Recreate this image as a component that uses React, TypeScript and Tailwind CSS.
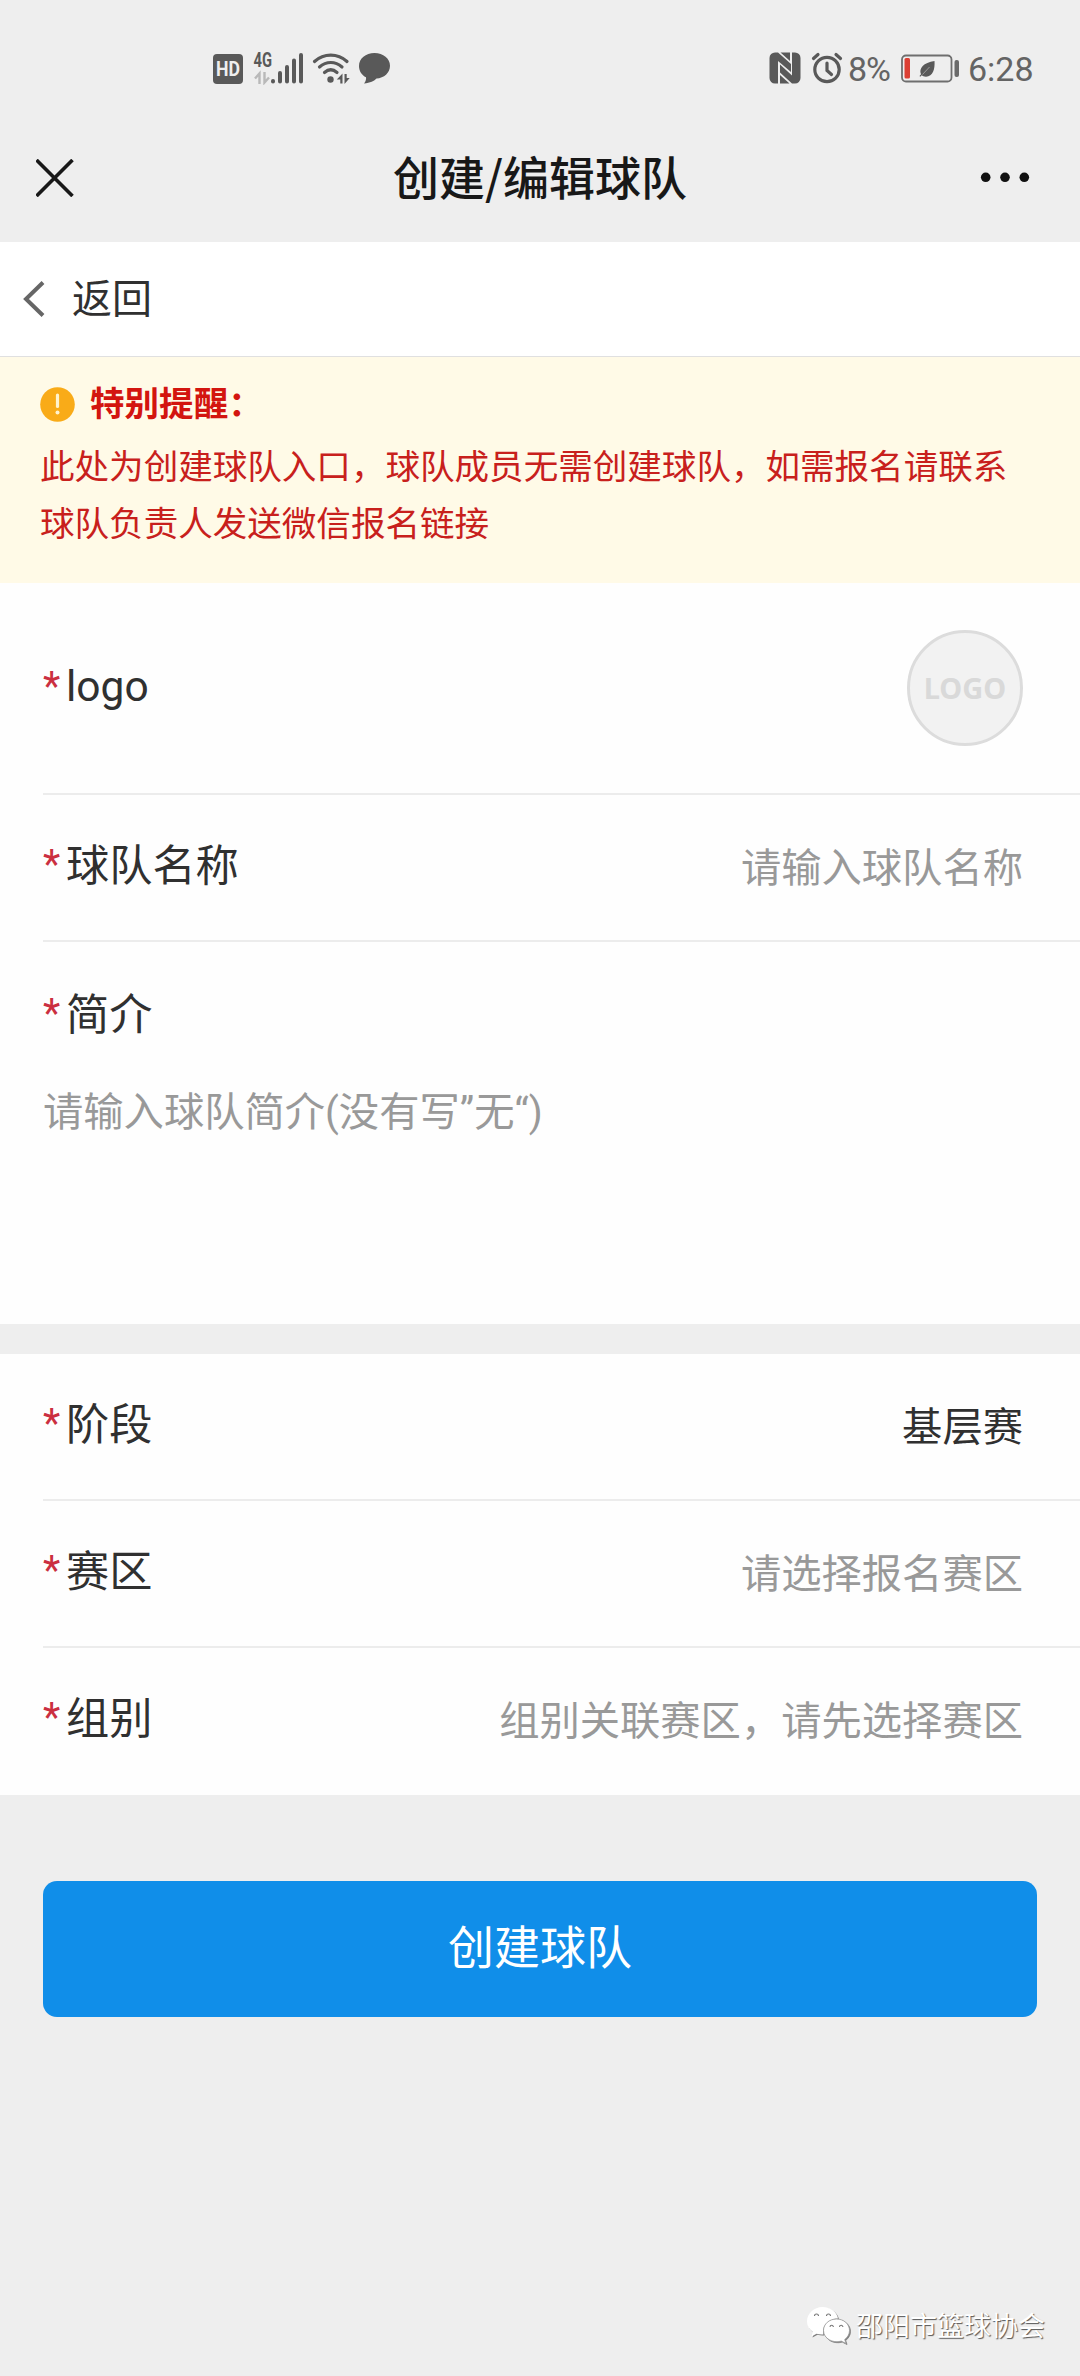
import type { ReactNode } from "react";

function SignalIcons() {
  return (
    <svg className="-mt-[8px] w-[180px] h-[42px] shrink-0" viewBox="212 43 180 42" fill="#595959">
      <rect x="213" y="54" width="30" height="30" rx="4" />
      <text x="228" y="76" textAnchor="middle" fontSize="19.5" fontWeight="700" fill="#eee" fontFamily="Roboto, sans-serif" textLength="24" lengthAdjust="spacingAndGlyphs">HD</text>
      <text x="253.500" y="66.500" fontSize="19.500" fontWeight="700" fontFamily="Roboto, sans-serif" textLength="18.500" lengthAdjust="spacingAndGlyphs">4G</text>
      <g fill="none" stroke="#b9b9b9" strokeWidth="2.4">
        <path d="M259.500 84V73.500l-4.500 5" />
        <path d="M264.500 72v10.500l4.500-5" />
      </g>
      <g stroke="#595959" strokeWidth="4" strokeLinecap="round">
        <path d="M273 81v.5M280 73v8.500M287 67v14.500M294 60.500v21M301 55v26.500" />
      </g>
      <g fill="none" stroke="#595959" strokeWidth="3.200" strokeLinecap="round">
        <path d="M314.500 61.500c9.500-8.500 23-8.500 32.500 0" />
        <path d="M319.500 67c6.800-6 15.700-6 22.500 0" />
        <path d="M324.500 72.500c4-3.500 8.500-3.500 12.500 0" />
      </g>
      <circle cx="330.500" cy="79.500" r="3.200" />
      <path d="M342.500 83.500h-2.200v-4h-3.500l5.700-6zM344.500 74h2.200v4h3l-5.200 6z" />
      <path d="M374.500 53c8.800 0 15.500 5.600 15.500 12.700 0 7.200-6 12.300-13.500 12.800-2 2.300-6.500 4.500-12.500 4.900 1.800-2.100 2.300-4.100 2-6.200-4.300-2.200-7-6.400-7-11.300C359 58.600 365.700 53 374.500 53z" />
    </svg>
  );
}

function NfcAlarmIcons() {
  return (
    <svg className="w-[76px] h-[34px] shrink-0" viewBox="768 51 76 34" fill="#595959">
      <path d="M775 52.500h3l13 11.500v8l-13-11v22.500h-3a5.500 5.500 0 0 1-5.500-5.500v-20a5.500 5.500 0 0 1 5.500-5.500z" />
      <path d="M795 83.500h-3l-12-11v-8l12 11v-23h3a5.500 5.500 0 0 1 5.500 5.500v20a5.500 5.500 0 0 1-5.500 5.500z" />
      <path d="M780.500 52.500h9.500v8.500zM789.500 83.500h-9.500v-8.500z" />
      <circle cx="827" cy="69.500" r="12.200" fill="none" stroke="#595959" strokeWidth="3.200" />
      <g fill="none" stroke="#595959" strokeWidth="3.200" strokeLinecap="round">
        <path d="M827 63v7.500l4.500 4" />
        <path d="M813.500 58.500l4.500-4M840.500 58.500l-4.500-4" />
      </g>
    </svg>
  );
}

function BatteryIcon() {
  return (
    <svg className="w-[60px] h-[34px] shrink-0" viewBox="900 51 60 34">
      <rect x="902" y="55.500" width="49.500" height="26" rx="4" fill="none" stroke="#6e6e6e" strokeWidth="1.800" />
      <rect x="904.500" y="58" width="5.500" height="20.500" rx="1.500" fill="#dc3f33" />
      <path d="M934.500 61c.6 8-1.500 15.500-8.500 15.700-2 0-3.400-.6-4.300-1.400l-1.500 1.500-.7-.7 1.500-1.800c-2.400-6 2.500-11.700 13.500-13.300z" fill="#595959" />
      <path d="M922.500 74.500l7-7.500" stroke="#aaa" strokeWidth=".8" />
      <rect x="954.500" y="60" width="4.500" height="17" rx="2" fill="#6a6a6a" />
    </svg>
  );
}

function WechatIcon() {
  return (
    <svg className="w-[46px] h-[42px] shrink-0 drop-shadow-[1px_1px_0_rgba(90,90,90,0.75)]" viewBox="805 2305 46 42" fill="#fff">
      <path d="M821.500 2307c8 0 14.500 5 15.500 11.500-8.500.3-15 6-15 13 0 1 .2 2 .4 3-2.400.2-4.600 0-6.900-.7l-5 2.700 1.300-4.500c-3.600-2.600-5.800-6.200-5.800-10.500 0-8 7-14.500 15.500-14.500z" />
      <path d="M835.500 2319c7.300 0 13 5 13 11.500 0 3.800-2 6.800-4.800 9l1.300 4-4.700-2.400c-8.600 2.500-17.800-2.600-17.800-10.600 0-6.500 5.700-11.500 13-11.500z" stroke="#9a9a9a" strokeWidth=".8" />
      <g fill="none" stroke="#777" strokeWidth="1.100">
        <path d="M813.500 2316a2 2 0 0 1 4 0M825.500 2316a2 2 0 0 1 4 0M829 2327a1.700 1.700 0 0 1 3.400 0M838.500 2327a1.700 1.700 0 0 1 3.400 0" />
      </g>
    </svg>
  );
}

function Label({ children }: { children: ReactNode }) {
  return (
    <div className="flex h-[60px] items-center text-[43.2px] leading-[60px] text-[#303030]">
      <span className="w-[23px] pt-[6px] font-['Roboto'] text-[40px] text-[#cb2f40]">*</span>
      <span className="whitespace-nowrap">{children}</span>
    </div>
  );
}

function Row({ label, value, filled, last }: { label: string; value: string; filled?: boolean; last?: boolean }) {
  return (
    <div className={last ? "ml-[43px] flex h-[147px] justify-between pr-[57px]" : "ml-[43px] flex h-[147px] justify-between border-b-2 border-[#ececec] pr-[57px]"}>
      <div className="pt-[37px]">
        <Label>{label}</Label>
      </div>
      <div className={filled ? "pt-[40px] text-[40.300px] leading-[60px] text-[#303030]" : "pt-[40px] text-[40.300px] leading-[60px] text-[#999]"}>{value}</div>
    </div>
  );
}

export default function App() {
  return (
    <div className="flex h-[2376px] w-[1080px] flex-col overflow-hidden bg-[#eee] font-['Noto_Sans_CJK_SC',sans-serif]">
      <div className="flex h-[110px] items-start justify-between pt-[51px] pr-[47px] pl-[212px] font-['Roboto'] text-[34px] leading-[36px] text-[#646464]">
        <SignalIcons />
        <div className="flex">
          <NfcAlarmIcons />
          <span className="w-[56px] pl-[4px] tracking-[-1px]">8%</span>
          <BatteryIcon />
          <span className="w-[73px] pl-[8px]">6:28</span>
        </div>
      </div>

      <header className="flex h-[132px] items-start justify-between px-[36px] pt-[38px]">
        <svg className="mt-[11px] h-[38px] w-[76px]" viewBox="1 0 76 38" stroke="#181818" strokeWidth="3.600">
          <path d="M1.500 1l36 36M37.500 1l-36 36" />
        </svg>
        <h1 className="text-[46px] leading-[54px] font-medium text-[#181818]">创建/编辑球队</h1>
        <svg className="mt-[20px] h-[18px] w-[76px]" viewBox="968 168 76 18" fill="#111">
          <circle cx="985.700" cy="177.300" r="4.800" />
          <circle cx="1005" cy="177.300" r="4.800" />
          <circle cx="1024.300" cy="177.300" r="4.800" />
        </svg>
      </header>

      <nav className="flex h-[115px] items-center border-b border-[#e0e0e0] bg-white pl-[22px] text-[40px] leading-[60px] text-[#303030]">
        <svg className="mr-[26px] h-[36px] w-[24px]" viewBox="0 0 24 36" fill="none" stroke="#666" strokeWidth="4">
          <path d="M21 1.500L4 18l17 16.500" />
        </svg>
        <span className="-mt-[6px]">返回</span>
      </nav>

      <section className="h-[226px] bg-[#fffae7] px-[40px] pt-[16px] text-[34.560px] leading-[57px] text-[#c8201c]">
        <div className="flex h-[57px] items-center">
          <svg className="mt-[6px] mr-[15px] h-[35px] w-[35px]" viewBox="0 0 35 35">
            <circle cx="17.500" cy="17.500" r="17.300" fill="#f9ab18" />
            <path d="M17.500 8v11.500" stroke="#fff3cf" strokeWidth="3.200" strokeLinecap="round" />
            <circle cx="17.500" cy="25.500" r="2" fill="#fff3cf" />
          </svg>
          <strong className="font-bold text-[#d3150f]">特别提醒：</strong>
        </div>
        <p className="mt-[6px] whitespace-nowrap">
          此处为创建球队入口，球队成员无需创建球队，如需报名请联系
          <br />
          球队负责人发送微信报名链接
        </p>
      </section>

      <section className="bg-[#fefefe]">
        <div className="ml-[43px] flex h-[212px] justify-between border-b-2 border-[#ececec] pr-[57px]">
          <div className="pt-[71px]">
            <Label>
              <span className="font-['Roboto'] text-[42.500px]">logo</span>
            </Label>
          </div>
          <div className="mt-[47px] flex h-[116px] w-[116px] items-center justify-center rounded-full border-[3px] border-[#dcdcdc] bg-[#f2f2f2] font-['Noto_Sans'] text-[29px] font-bold text-[#d9d9d9]">
            LOGO
          </div>
        </div>
        <Row label="球队名称" value="请输入球队名称" />
        <div className="h-[382px] pt-[39px] pl-[43px]">
          <Label>简介</Label>
          <div className="mt-[42px] font-['Roboto','Noto_Sans_CJK_SC'] text-[40.300px] leading-[60px] text-[#999]">请输入球队简介(没有写”无“)</div>
        </div>
      </section>

      <section className="mt-[30px] bg-[#fefefe]">
        <Row label="阶段" value="基层赛" filled />
        <Row label="赛区" value="请选择报名赛区" />
        <Row label="组别" value="组别关联赛区，请先选择赛区" last />
      </section>

      <button className="mx-[43px] mt-[86px] h-[136px] rounded-[14px] bg-[#108ee9] pb-[11px] text-[46px] leading-[60px] text-white">创建球队</button>

      <footer className="mt-auto flex h-[71px] items-start justify-end pr-[35px]">
        <WechatIcon />
        <span className="ml-[4px] text-[27px] leading-[40px] text-white [text-shadow:1px_1px_1px_#555]">邵阳市篮球协会</span>
      </footer>
    </div>
  );
}
